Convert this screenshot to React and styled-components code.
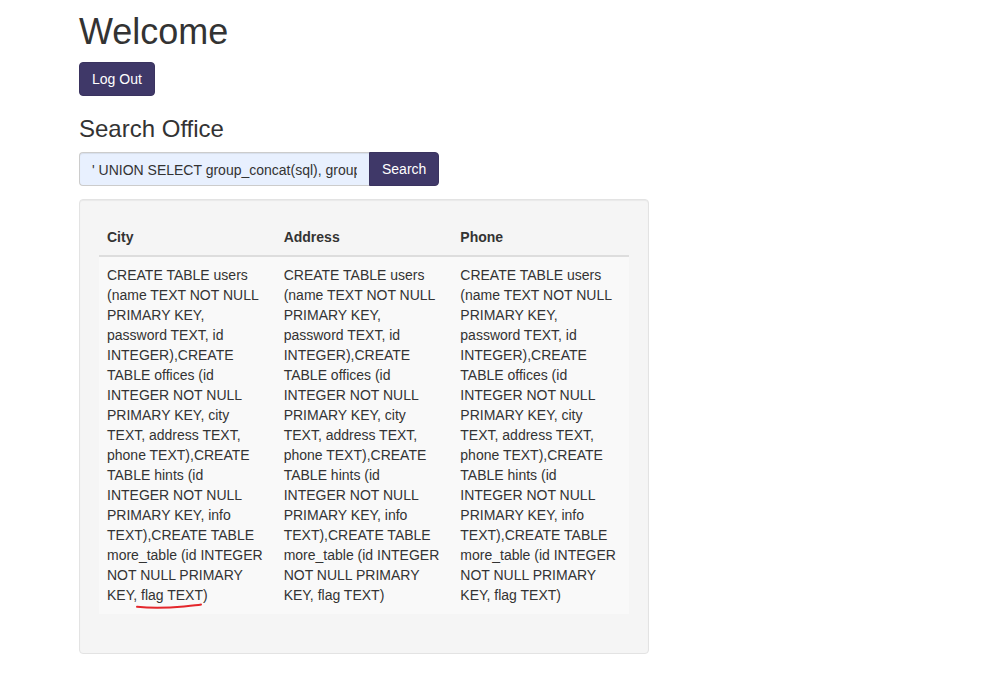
import React from "react";
import styled, { createGlobalStyle } from "styled-components";

const GlobalStyle = createGlobalStyle`
  body {
    margin: 0;
    font-family: "Liberation Sans", Arial, sans-serif;
    font-size: 14px;
    line-height: 1.42857;
    color: #333;
    background: #fff;
  }
  * {
    box-sizing: border-box;
  }
`;

const schema =
  "CREATE TABLE users (name TEXT NOT NULL PRIMARY KEY, password TEXT, id INTEGER),CREATE TABLE offices (id INTEGER NOT NULL PRIMARY KEY, city TEXT, address TEXT, phone TEXT),CREATE TABLE hints (id INTEGER NOT NULL PRIMARY KEY, info TEXT),CREATE TABLE more_table (id INTEGER NOT NULL PRIMARY KEY, ";

const columns = ["City", "Address", "Phone"];

const App = () => {
  return (
    <>
      <GlobalStyle />
      <Page>
        <Title>Welcome</Title>
        <Button type="button">Log Out</Button>
        <SubTitle>Search Office</SubTitle>

        <InputGroup>
          <SearchInput
            readOnly
            value="' UNION SELECT group_concat(sql), group_concat(sql), group_concat(sql) FROM sqlite_master --"
          />
          <GroupButton type="button">Search</GroupButton>
        </InputGroup>

        <Well>
          <Table>
            <thead>
              <tr>
                {columns.map((c) => (
                  <Th key={c}>{c}</Th>
                ))}
              </tr>
            </thead>
            <tbody>
              <tr>
                {columns.map((c, i) => (
                  <Td key={c}>
                    {schema}
                    {i === 0 ? (
                      <Marked>
                        flag TEXT
                        <Scribble viewBox="0 0 66 8" preserveAspectRatio="none">
                          <path
                            d="M1 4.8 C 14 6.2, 32 6, 48 4.4 S 62 3, 65 2.6"
                            fill="none"
                            stroke="#e4262b"
                            strokeWidth="2"
                            strokeLinecap="round"
                          />
                        </Scribble>
                      </Marked>
                    ) : (
                      "flag TEXT"
                    )}
                    )
                  </Td>
                ))}
              </tr>
            </tbody>
          </Table>
        </Well>
      </Page>
    </>
  );
};

export default App;

const Page = styled.div`
  padding-left: 79px;
  width: 649px;
`;

const Title = styled.h1`
  font-size: 36px;
  font-weight: 500;
  line-height: 1.1;
  margin: 12px 0 10px;
`;

const SubTitle = styled.h3`
  font-size: 24px;
  font-weight: 500;
  line-height: 1.1;
  margin: 20px 0 10px;
`;

const Button = styled.button`
  display: inline-block;
  height: 34px;
  padding: 7px 12px 5px;
  font-family: inherit;
  font-size: 14px;
  line-height: 1.42857;
  color: #fff;
  background: #3f3868;
  border: 1px solid #3a335f;
  border-radius: 4px;
  cursor: pointer;
`;

const InputGroup = styled.div`
  display: flex;
  width: 360px;
  height: 34px;
`;

const SearchInput = styled.input`
  width: 290px;
  height: 34px;
  padding: 7px 12px 5px;
  font-family: inherit;
  font-size: 14px;
  color: #333;
  background: #e8f0fe;
  border: 1px solid #ccc;
  border-right: 0;
  border-radius: 4px 0 0 4px;
  box-shadow: inset 0 1px 1px rgba(0, 0, 0, 0.075);
  outline: none;
`;

const GroupButton = styled(Button)`
  width: 70px;
  border-radius: 0 4px 4px 0;
`;

const Well = styled.div`
  margin-top: 13px;
  width: 570px;
  padding: 19px;
  background: #f5f5f5;
  border: 1px solid #e3e3e3;
  border-radius: 4px;
  box-shadow: inset 0 1px 1px rgba(0, 0, 0, 0.05);
`;

const Table = styled.table`
  width: 100%;
  margin-bottom: 20px;
  border-collapse: collapse;
  border-spacing: 0;
  table-layout: fixed;

  tbody tr {
    background: #f9f9f9;
  }
`;

const Th = styled.th`
  padding: 9px 8px 7px;
  text-align: left;
  font-weight: bold;
  line-height: 1.42857;
  vertical-align: bottom;
  border-bottom: 2px solid #ddd;
`;

const Td = styled.td`
  padding: 9px 8px 8px;
  line-height: 1.42857;
  vertical-align: top;
  border-top: 1px solid #ddd;
`;

const Marked = styled.span`
  position: relative;
`;

const Scribble = styled.svg`
  position: absolute;
  left: -5px;
  bottom: -7px;
  width: 66px;
  height: 8px;
  overflow: visible;
`;
